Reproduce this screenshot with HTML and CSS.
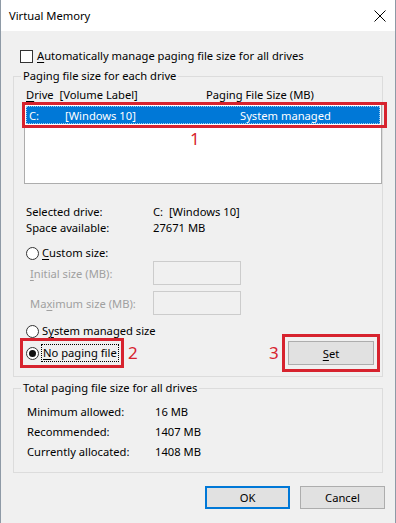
FILE: index.html
```html
<!DOCTYPE html>
<html>
<head>
<meta charset="utf-8">
<link rel="stylesheet" href="styles.css">
</head>
<body>
<div class="window">
  <div class="titlebar">
    <span class="title">Virtual Memory</span>
    <svg class="close" width="12" height="12" viewBox="0 0 12 12"><path d="M0.5 0.5 L11.5 11.5 M11.5 0.5 L0.5 11.5" stroke="#000" stroke-width="1" fill="none"/></svg>
  </div>
  <div class="content">
    <div class="chk-row">
      <span class="checkbox"></span>
      <span class="chk-label"><u>A</u>utomatically manage paging file size for all drives</span>
    </div>

    <fieldset class="group g1">
      <legend>Paging file size for each drive</legend>
      <div class="list-head">
        <span class="col-drive"><u>D</u>rive&nbsp; [Volume Label]</span>
        <span class="col-size">Paging File Size (MB)</span>
      </div>
      <div class="listbox">
        <div class="row sel">
          <span class="c1">C:</span>
          <span class="c2">[Windows 10]</span>
          <span class="c3">System managed</span>
        </div>
      </div>

      <div class="info first"><span class="lbl">Selected drive:</span><span class="val">C:&nbsp; [Windows 10]</span></div>
      <div class="info"><span class="lbl">Space available:</span><span class="val">27671 MB</span></div>

      <div class="radio-row custom"><span class="radio"></span><span><u>C</u>ustom size:</span></div>
      <div class="field-row init"><span class="dis-lbl"><u>I</u>nitial size (MB):</span><span class="input"></span></div>
      <div class="field-row max"><span class="dis-lbl">Ma<u>x</u>imum size (MB):</span><span class="input"></span></div>

      <div class="radio-row sysman"><span class="radio"></span><span>S<u>y</u>stem managed size</span></div>
      <div class="nopage-row">
        <div class="radio-inline"><span class="radio on"></span><span class="focus"><u>N</u>o paging file</span></div>
        <button class="btn set"><u>S</u>et</button>
      </div>
    </fieldset>

    <fieldset class="group g2">
      <legend>Total paging file size for all drives</legend>
      <div class="tot first"><span class="lbl">Minimum allowed:</span><span class="val">16 MB</span></div>
      <div class="tot"><span class="lbl">Recommended:</span><span class="val">1407 MB</span></div>
      <div class="tot"><span class="lbl">Currently allocated:</span><span class="val">1408 MB</span></div>
    </fieldset>

    <div class="buttons">
      <button class="btn ok">OK</button>
      <button class="btn cancel">Cancel</button>
    </div>
  </div>

  <div class="mark mark1"></div>
  <div class="mark mark2"></div>
  <div class="mark mark3"></div>
  <span class="num num1">1</span>
  <span class="num num2">2</span>
  <span class="num num3">3</span>
</div>
</body>
</html>
```

FILE: styles.css
```css
* { box-sizing: border-box; }
html, body { margin: 0; padding: 0; }
body {
  width: 396px;
  height: 523px;
  background: #f0f0f0;
  font-family: "Noto Sans", "DejaVu Sans", sans-serif;
  font-size: 11.2px;
  color: #000;
  overflow: hidden;
}
u { text-decoration: underline; text-underline-offset: 2px; }

.window {
  position: relative;
  width: 396px;
  height: 523px;
  background: #f0f0f0;
  border-left: 1px solid #8e9aa6;
  border-right: 1px solid #8e9aa6;
}

.titlebar {
  height: 31px;
  background: #fff;
  display: flex;
  align-items: center;
  justify-content: space-between;
  padding: 0 8px 0 8px;
}
.title { font-size: 11.2px; line-height: 16px; }
.close { margin-right: 1px; }

.content { padding: 0 12px 0 12px; }

.chk-row {
  margin-top: 18px;
  height: 14px;
  display: flex;
  align-items: center;
  padding-left: 7px;
}
.checkbox {
  width: 13px; height: 13px;
  border: 1px solid #333;
  background: #fff;
  margin-right: 4px;
  flex: none;
}
.chk-label { line-height: 14px; }

.group {
  margin: 0;
  padding: 0;
  border: 1px solid #dcdcdc;
  min-width: 0;
}
.group legend {
  padding: 0 2px;
  margin-left: 7px;
  line-height: 16px;
  height: 16px;
}
.g1 { margin-top: 5px; padding-bottom: 11px; }

.list-head {
  margin-top: 3px;
  height: 16px;
  line-height: 16px;
  display: flex;
  padding-left: 12px;
}
.col-drive { width: 180px; }

.listbox {
  margin-top: 1px;
  margin-left: 10px;
  height: 80px;
  border: 1px solid #adadad;
  background: #fff;
  padding: 1px;
}
.row {
  height: 18px;
  display: flex;
  align-items: center;
  padding-left: 3px;
}
.row.sel { background: #0078d7; color: #fff; outline: 1px dotted #9ccaf0; outline-offset: -1px; }
.c1 { width: 36px; }
.c2 { width: 175px; }

.info { height: 16px; line-height: 16px; display: flex; padding-left: 12px; }
.info.first { margin-top: 20px; }
.info .lbl { width: 127px; }

.radio-row { height: 16px; display: flex; align-items: center; padding-left: 12px; line-height: 16px; }
.radio {
  width: 13px; height: 13px;
  border: 1px solid #333;
  border-radius: 50%;
  background: #fff;
  margin-right: 3px;
  flex: none;
  display: flex;
  align-items: center;
  justify-content: center;
}
.radio.on::after {
  content: "";
  width: 7px; height: 7px;
  border-radius: 50%;
  background: #111;
}
.custom { margin-top: 9px; }

.field-row { height: 24px; display: flex; align-items: center; padding-left: 16px; }
.dis-lbl { color: #a0a0a0; width: 123px; }
.input { width: 88px; height: 24px; border: 1px solid #cccccc; background: #f0f0f0; }
.max { margin-top: 6px; }

.sysman { margin-top: 8px; }

.nopage-row {
  margin-top: 2px;
  height: 24px;
  display: flex;
  align-items: center;
  justify-content: space-between;
  padding-left: 12px;
  padding-right: 8px;
}
.radio-inline { display: flex; align-items: center; }
.focus { border: 1px dotted #000; padding: 0 1px; line-height: 16px; margin-left: -1px; }

.btn {
  font-family: inherit;
  font-size: 11.2px;
  color: #000;
  background: #e1e1e1;
  border: 1px solid #adadad;
  padding: 0;
  margin: 0;
}
.set { width: 86px; height: 24px; }

.g2 { margin-top: 3px; padding-bottom: 12px; }
.tot { height: 16px; line-height: 16px; display: flex; padding-left: 13px; }
.tot.first { margin-top: 8px; }
.tot + .tot { margin-top: 4px; }
.tot .lbl { width: 128px; }

.buttons {
  margin-top: 13px;
  margin-right: -2px;
  display: flex;
  justify-content: flex-end;
  gap: 10px;
}
.ok, .cancel { width: 85px; height: 23px; }
.ok { border: 2px solid #0078d7; }

.mark { position: absolute; border: 3px solid #d7232e; }
.mark1 { left: 21px; top: 102px; width: 365px; height: 26px; }
.mark2 { left: 19px; top: 338px; width: 104px; height: 30px; }
.mark3 { left: 281px; top: 334px; width: 98px; height: 38px; }

.num {
  position: absolute;
  color: #d7232e;
  font-size: 17px;
  line-height: 20px;
}
.num1 { left: 189px; top: 129px; }
.num2 { left: 127px; top: 343px; }
.num3 { left: 268px; top: 343px; }
```
